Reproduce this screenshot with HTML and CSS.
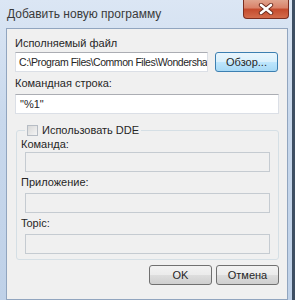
FILE: index.html
```html
<!DOCTYPE html>
<html lang="ru">

<head>
  <meta charset="UTF-8">
  <title>Добавить новую программу</title>
  <link rel="stylesheet" href="styles.css">
</head>

<body>
  <div class="dialogWindow">
    <div class="titleBar">
      <div class="titleText">Добавить новую программу</div>
      <div class="closeButton">
        <svg width="18" height="12" viewBox="0 0 18 12">
          <path d="M4 2 L14 10 M14 2 L4 10" stroke="#6a2a1c" stroke-width="4.4" stroke-linecap="round" />
          <path d="M4 2 L14 10 M14 2 L4 10" stroke="#ffffff" stroke-width="2.6" stroke-linecap="round" />
        </svg>
      </div>
    </div>
    <div class="clientArea">
      <div class="fieldLabel">Исполняемый файл</div>
      <div class="fileRow">
        <div class="textBox fileBox">C:\Program Files\Common Files\Wondershar</div>
        <div class="pushButton browseButton">Обзор...</div>
      </div>
      <div class="fieldLabel labelGap">Командная строка:</div>
      <div class="textBox">"%1"</div>
      <fieldset class="ddeGroup">
        <legend class="ddeLegend"><span class="checkBox"></span>Использовать DDE</legend>
        <div class="groupLabel firstLabel">Команда:</div>
        <div class="textBox disabledBox"></div>
        <div class="groupLabel">Приложение:</div>
        <div class="textBox disabledBox"></div>
        <div class="groupLabel">Topic:</div>
        <div class="textBox disabledBox"></div>
      </fieldset>
      <div class="buttonRow">
        <div class="pushButton">OK</div>
        <div class="pushButton">Отмена</div>
      </div>
    </div>
  </div>
</body>

</html>
```

FILE: styles.css
```css
body {
  margin: 0;
  background-color: #3e4f63;
  font-family: "Liberation Sans", Arial, sans-serif;
  font-size: 11px;
  color: #262626;
}

.dialogWindow {
  display: flex;
  flex-direction: column;
  width: 282px;
  height: 300px;
  padding: 0 4px 0 6px;
  background: linear-gradient(#dbe6f4, #c8d8ec 40%, #bfd1e8);
}

.titleBar {
  display: flex;
  align-items: flex-start;
  height: 28px;
}

.titleText {
  margin-top: 7px;
  padding-left: 1px;
  font-size: 12px;
  color: #3a3a3a;
}

.closeButton {
  display: flex;
  justify-content: center;
  align-items: center;
  margin-left: auto;
  margin-right: -1px;
  width: 44px;
  height: 18px;
  border: 1px solid #7b2e20;
  border-top: none;
  border-radius: 0 0 4px 4px;
  background: linear-gradient(#e0a48e, #d98168 45%, #c44a2c 50%, #d36c4c);
}

.clientArea {
  display: flex;
  flex-direction: column;
  height: 265px;
  border: 1px solid #91a5bf;
  background-color: #f0f0f0;
  padding: 7px 8px 0 8px;
}

.fieldLabel {
  height: 15px;
  line-height: 15px;
  margin-bottom: 1px;
}

.labelGap {
  margin-top: 4px;
  margin-bottom: 3px;
}

.fileRow {
  display: flex;
  align-items: center;
  gap: 7px;
}

.textBox {
  height: 18px;
  line-height: 18px;
  padding: 0 4px;
  border: 1px solid #dbdfe6;
  border-top-color: #abadb3;
  background-color: white;
  white-space: nowrap;
  overflow: hidden;
}

.fileBox {
  width: 188px;
  padding: 0 0 0 3px;
  font-size: 10.5px;
  letter-spacing: -0.45px;
}

.pushButton {
  width: 61px;
  height: 18px;
  line-height: 18px;
  text-align: center;
  border: 1px solid #707070;
  border-radius: 3px;
  background: linear-gradient(#f2f2f2, #ebebeb 50%, #dddddd 51%, #cfcfcf);
}

.browseButton {
  border-color: #3c7fb1;
  background: linear-gradient(#eaf6fd, #d9f0fc 50%, #bee6fd 51%, #a7d9f5);
}

.ddeGroup {
  margin: 10px 0 0 1px;
  padding: 0 8px 5px 4px;
  border: 1px solid #d5dfe5;
  border-radius: 3px;
}

.ddeLegend {
  display: flex;
  align-items: center;
  margin-left: 4px;
  padding: 0 2px;
  height: 13px;
}

.checkBox {
  width: 11px;
  height: 11px;
  margin-right: 4px;
  border: 1px solid #b6bcc4;
  background: linear-gradient(135deg, #d9d9d9, #f4f4f4);
  box-sizing: border-box;
}

.groupLabel {
  margin: 3px 0;
  height: 15px;
  line-height: 15px;
}

.firstLabel {
  margin: 0;
}

.disabledBox {
  margin-left: 4px;
  border-color: #c5cbd1;
  background-color: #f0f0f0;
}

.buttonRow {
  display: flex;
  justify-content: flex-end;
  gap: 4px;
  margin-top: 5px;
}
```
